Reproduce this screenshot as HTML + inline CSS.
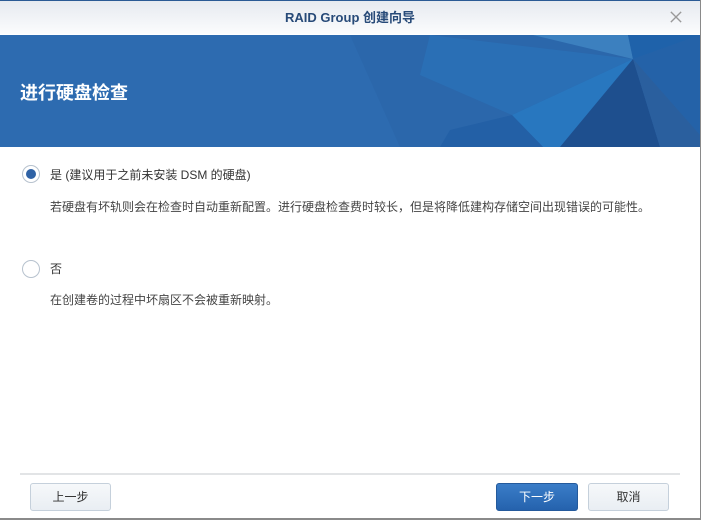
<!DOCTYPE html>
<html><head><meta charset="utf-8"><style>
*{margin:0;padding:0;box-sizing:border-box}
body{width:701px;height:520px;background:#8a8a8a;position:relative;overflow:hidden;font-family:"Liberation Sans","Noto Sans CJK SC",sans-serif}
.win{position:absolute;left:0;top:0;width:700px;height:518px;background:#fff;border-top:1px solid #2a5a95;overflow:hidden}
.tb{height:33px;background:linear-gradient(#e6eaf0,#fbfcfd);text-align:center;font-size:13px;font-weight:bold;color:#274a78;line-height:33px}
.x{position:absolute;right:18px;top:10px;width:12px;height:12px}
.ban{position:absolute;top:34px;left:0;width:700px;height:112px;background:#2d6bb0;overflow:hidden}
.ban h1{position:absolute;left:20px;top:44px;font-size:18px;color:#fff;font-weight:bold}
.r{position:absolute;left:22px;width:18px;height:18px;border:1px solid #b7c2ce;border-radius:50%;background:#fff}
.r.on::after{content:"";position:absolute;left:3px;top:3px;width:10px;height:10px;border-radius:50%;background:#2f62a5}
.t{position:absolute;left:50px;font-size:12px;color:#333}
.d{position:absolute;left:50px;font-size:12px;color:#444;white-space:nowrap}
.sep{position:absolute;left:20px;top:472px;width:660px;height:2px;background:#e2e4e6}
.b{position:absolute;top:482px;height:28px;border:1px solid #c5d0db;border-radius:3px;background:linear-gradient(#f6f8fa,#e9eef3);font-size:12px;color:#333;text-align:center;line-height:26px}
.b.p{background:linear-gradient(#3a7dc8,#2562ad);border-color:#245a9c;color:#fff}
</style></head><body>
<div class="win">
<div class="tb">RAID Group 创建向导</div>
<svg class="x" viewBox="0 0 14 14"><path d="M1 1L13 13M13 1L1 13" stroke="#999" stroke-width="1.6"/></svg>
<div class="ban">
<svg width="700" height="112" style="position:absolute;left:0;top:0">
<polygon points="350,0 700,0 700,112 400,112" fill="#2b67ab"/>
<polygon points="430,0 633,24 512,80 420,40" fill="#2a6fb5"/>
<polygon points="533,0 628,0 633,24" fill="#3c80bf"/>
<polygon points="633,24 512,80 543,112 560,112" fill="#2877bf"/>
<polygon points="450,95 512,80 543,112 440,112" fill="#2360a6"/>
<polygon points="633,24 560,112 660,112" fill="#1e4f8e"/>
<polygon points="633,24 700,0 628,0" fill="#1f62aa"/>
<polygon points="633,24 700,0 700,100" fill="#2462a8"/>
<polygon points="633,24 700,100 700,112 660,112" fill="#2a5f9e"/>
</svg>
<h1>进行硬盘检查</h1></div>
<div class="r on" style="top:164px"></div>
<div class="t" style="top:165px">是 (建议用于之前未安装 DSM 的硬盘)</div>
<div class="d" style="top:197px">若硬盘有坏轨则会在检查时自动重新配置。进行硬盘检查费时较长，但是将降低建构存储空间出现错误的可能性。</div>
<div class="r" style="top:259px"></div>
<div class="t" style="top:259px">否</div>
<div class="d" style="top:290px">在创建卷的过程中坏扇区不会被重新映射。</div>
<div class="sep"></div>
<div class="b" style="left:30px;width:81px">上一步</div>
<div class="b p" style="left:496px;width:82px">下一步</div>
<div class="b" style="left:588px;width:81px">取消</div>
</div>
</body></html>
